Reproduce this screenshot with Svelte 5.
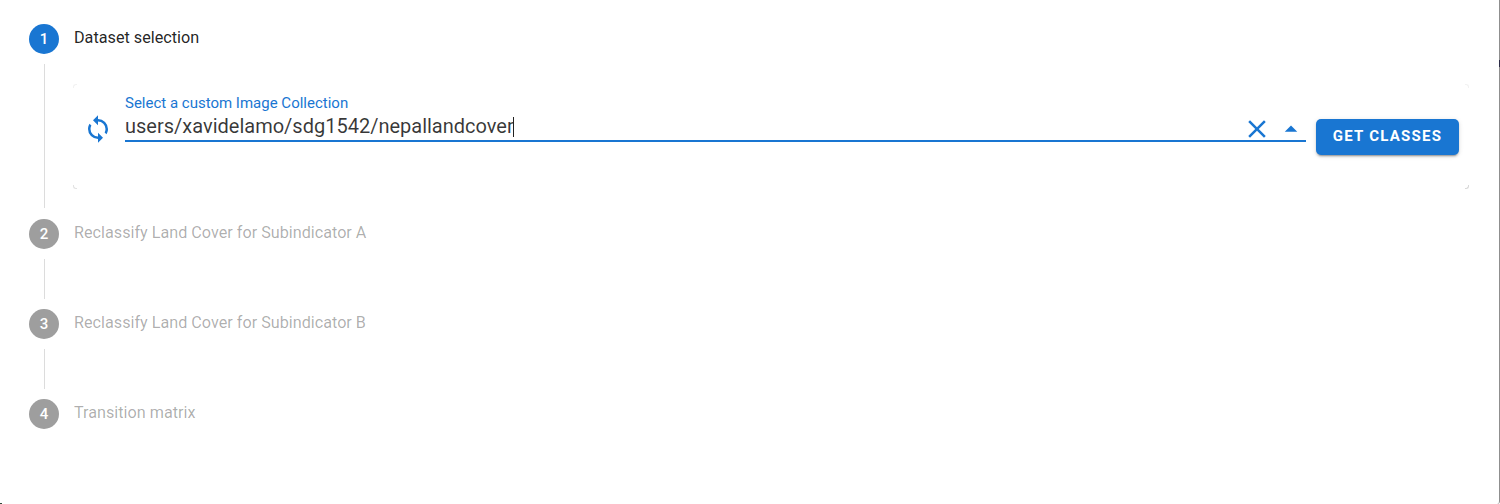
<script>
  const steps = [
    { n: 2, title: "Reclassify Land Cover for Subindicator A" },
    { n: 3, title: "Reclassify Land Cover for Subindicator B" },
    { n: 4, title: "Transition matrix" }
  ];
</script>

<div class="stepper">
  <div class="step-header">
    <span class="step-num active">1</span>
    <span class="step-title active">Dataset selection</span>
  </div>
  <div class="step-content first">
    <div class="card">
      <i class="corner tl"></i><i class="corner bl"></i><i class="corner tr"></i><i class="corner br"></i>
      <svg class="refresh" viewBox="0 0 24 24" width="30" height="30">
        <path fill="#1976d2" transform="matrix(-1 0 0 1 24 0)" d="M12,6V9L16,5L12,1V4A8,8 0 0,0 4,12C4,13.57 4.46,15.03 5.24,16.26L6.7,14.8C6.25,13.97 6,13 6,12A6,6 0 0,1 12,6M18.76,7.74L17.3,9.2C17.74,10.04 18,11 18,12A6,6 0 0,1 12,18V15L8,19L12,23V20A8,8 0 0,0 20,12C20,10.43 19.54,8.97 18.76,7.74Z" />
      </svg>
      <div class="field">
        <label class="field-label" for="collection">Select a custom Image Collection</label>
        <div class="field-row" id="collection">
          <span class="field-value">users/xavidelamo/sdg1542/nepallandcover</span>
          <svg class="clear" viewBox="0 0 24 24" width="30" height="30">
            <path fill="#1976d2" d="M19,6.41L17.59,5L12,10.59L6.41,5L5,6.41L10.59,12L5,17.59L6.41,19L12,13.41L17.59,19L19,17.59L13.41,12L19,6.41Z" />
          </svg>
          <svg class="arrow" viewBox="0 0 24 24" width="30" height="30">
            <path fill="#1976d2" d="M7,15L12,10L17,15H7Z" />
          </svg>
        </div>
      </div>
      <button class="primary">GET CLASSES</button>
    </div>
  </div>
  {#each steps as step, i}
    <div class="step-header">
      <span class="step-num">{step.n}</span>
      <span class="step-title">{step.title}</span>
    </div>
    {#if i < steps.length - 1}
      <div class="step-content"></div>
    {/if}
  {/each}
</div>

<style>
  :global(body) {
    margin: 0;
    background: #fff;
  }

  .stepper {
    position: relative;
    box-sizing: border-box;
    width: 1500px;
    height: 504px;
    padding: 24px 30px 0 29px;
    border-right: 1px solid #8f8f8f;
    border-bottom-right-radius: 3px;
    font-family: Roboto, sans-serif;
  }

  /* bits of the page behind the panel that show at its edges */
  .stepper::before {
    content: "";
    position: absolute;
    right: -1px;
    top: 60px;
    width: 1px;
    height: 7px;
    background: #2b2b45;
  }

  .stepper::after {
    content: "";
    position: absolute;
    left: 0;
    bottom: 0;
    width: 2px;
    height: 1px;
    background: #2f4a3a;
  }

  .step-header {
    display: flex;
    align-items: center;
    height: 30px;
  }

  .step-num {
    display: flex;
    align-items: center;
    justify-content: center;
    width: 30px;
    height: 30px;
    margin-right: 15px;
    border-radius: 50%;
    background: #9e9e9e;
    color: #fff;
    font-size: 15px;
    font-weight: 500;
  }

  .step-num.active {
    background: #1976d2;
  }

  .step-title {
    font-size: 16.2px;
    color: rgba(0, 0, 0, 0.32);
    position: relative;
    top: -2px;
  }

  .step-title.active {
    color: rgba(0, 0, 0, 0.87);
  }

  .step-content {
    box-sizing: border-box;
    height: 40px;
    margin: 10px 0 10px 15px;
    border-left: 1px solid #dcdcdc;
  }

  .step-content.first {
    height: 144px;
    padding: 20px 0 0 28px;
    margin-bottom: 11px;
  }

  .card {
    position: relative;
    display: flex;
    align-items: flex-start;
    box-sizing: border-box;
    height: 105px;
    padding: 10px 10px 0 10px;
    border-radius: 4px;
  }

  .corner {
    position: absolute;
    width: 3px;
    height: 3px;
    border: 0 solid #f2f2f2;
  }

  .tl { left: 0; top: 0; border-width: 1px 0 0 1px; border-top-left-radius: 3px; }
  .bl { left: 0; bottom: 0; border-width: 0 0 1px 1px; border-bottom-left-radius: 3px; border-color: #e2e2e2; }
  .tr { right: 0; top: 0; border-width: 1px 1px 0 0; border-top-right-radius: 3px; }
  .br { right: 0; bottom: 0; border-width: 0 1px 1px 0; border-bottom-right-radius: 3px; border-color: #d8d8d8; }

  .refresh {
    flex: none;
    margin: 20px 12px 0 0;
  }

  .field {
    flex: 1;
    min-width: 0;
  }

  .field-label {
    display: block;
    height: 17px;
    padding-top: 1px;
    margin-bottom: -1px;
    font-size: 15px;
    line-height: 17px;
    color: #1976d2;
  }

  .field-row {
    display: flex;
    align-items: center;
    height: 29px;
    border-bottom: 2px solid #1976d2;
  }

  .field-value {
    flex: 1;
    font-size: 20px;
    color: rgba(0, 0, 0, 0.78);
  }

  .field-value::after {
    content: "";
    display: inline-block;
    width: 1px;
    height: 20px;
    margin-left: -1px;
    background: #222;
    vertical-align: -4px;
  }

  .clear {
    flex: none;
    margin: 6px 4px 0 0;
  }

  .arrow {
    flex: none;
    margin-top: 4px;
  }

  .primary {
    flex: none;
    width: 143px;
    height: 36px;
    margin: 25px 0 0 10px;
    padding: 0 0 2px;
    border: 0;
    border-radius: 5px;
    background: #1976d2;
    color: #fff;
    font-family: Roboto, sans-serif;
    font-size: 15px;
    font-weight: 700;
    letter-spacing: 1.25px;
    box-shadow: 0 3px 1px -2px rgba(0, 0, 0, 0.2), 0 2px 2px 0 rgba(0, 0, 0, 0.14), 0 1px 5px 0 rgba(0, 0, 0, 0.12);
  }
</style>
